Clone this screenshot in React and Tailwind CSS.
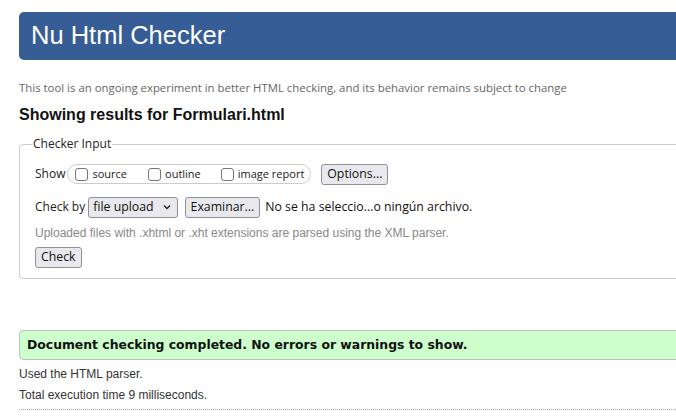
import React from "react";

const segoe = { fontFamily: '"Open Sans", "Noto Sans", sans-serif' };

const Box = () => (
  <span className="inline-block w-[13px] h-[13px] rounded-[3px] border border-[#767676] bg-white mr-[4px]" />
);

const Btn = ({ children, className = "" }) => (
  <span
    className={`inline-flex items-center h-[21px] px-[5px] rounded-[3px] border border-[#8f8f9d] bg-[#e9e9ed] text-[12.3px] text-[#111] ${className}`}
    style={segoe}
  >
    {children}
  </span>
);

export default function App() {
  return (
    <div className="w-[676px] h-[419px] overflow-hidden bg-white text-[#333] font-['Liberation_Sans',Arial,sans-serif]">
      <div className="pl-[19px] pt-[12px] w-[760px]">
        {/* header */}
        <div className="h-[48px] rounded-[5px] bg-[#365d95] flex items-center pl-[12px]">
          <h1 className="text-white text-[25.5px] leading-none">Nu Html Checker</h1>
        </div>

        <p className="mt-[20px] text-[11.4px] leading-[16px] text-[#666]" style={segoe}>
          This tool is an ongoing experiment in better HTML checking, and its behavior remains subject to change
        </p>

        <h2 className="mt-[10px] text-[16px] font-bold leading-[18px] text-[#111]">
          Showing results for Formulari.html
        </h2>

        {/* checker input */}
        <fieldset className="mt-[13px] border border-[#ccc] rounded-[4px] pl-[15px] pr-[8px] pt-[4px] h-[142px]">
          <legend className="ml-[-3px] px-[1px] text-[12px] leading-[14px] text-[#222]" style={segoe}>
            Checker Input
          </legend>

          <div className="flex items-center h-[22px] mt-[8px]">
            <span className="text-[12px] text-[#222] mr-[2px]" style={segoe}>Show</span>
            <span className="flex items-center h-[20px] border border-[#ccc] rounded-full pl-[7px] pr-[6px] text-[11px] text-[#222]" style={segoe}>
              <span className="flex items-center mr-[21px]"><Box />source</span>
              <span className="flex items-center mr-[20px]"><Box />outline</span>
              <span className="flex items-center"><Box />image report</span>
            </span>
            <Btn className="ml-[10px]">Options...</Btn>
          </div>

          <div className="flex items-center h-[22px] mt-[11px]">
            <span className="text-[12px] text-[#222] mr-[3px]" style={segoe}>Check by</span>
            <span
              className="inline-flex items-center h-[21px] pl-[4px] pr-[5px] rounded-[3px] border border-[#8f8f9d] bg-[#e9e9ed] text-[12.3px] text-[#111]"
              style={segoe}
            >
              file upload
              <svg width="10" height="10" viewBox="0 0 10 10" className="ml-[8px]">
                <path d="M2 3.5 L5 6.5 L8 3.5" fill="none" stroke="#222" strokeWidth="1.4" />
              </svg>
            </span>
            <Btn className="ml-[7px]">Examinar...</Btn>
            <span className="ml-[5px] text-[12.3px] text-[#111]" style={segoe}>No se ha seleccio...o ningún archivo.</span>
          </div>

          <p className="mt-[7px] text-[12px] leading-[16px] text-[#888]">
            Uploaded files with .xhtml or .xht extensions are parsed using the XML parser.
          </p>

          <div className="mt-[3px]">
            <Btn>Check</Btn>
          </div>
        </fieldset>

        {/* result */}
        <div className="mt-[51px] h-[30px] rounded-l-[4px] border border-[#c0c0c0] bg-[#ccffcc] flex items-center pl-[7px]">
          <span className="text-[12.4px] font-bold text-[#111] font-['DejaVu_Sans',Verdana,sans-serif]">
            Document checking completed. No errors or warnings to show.
          </span>
        </div>

        <p className="mt-[6px] text-[12px] leading-[16px] text-[#333]">Used the HTML parser.</p>
        <p className="mt-[5px] text-[12px] leading-[16px] text-[#333]">Total execution time 9 milliseconds.</p>
        <div className="mt-[6px] border-t border-dotted border-[#aaa]" />
      </div>
    </div>
  );
}
